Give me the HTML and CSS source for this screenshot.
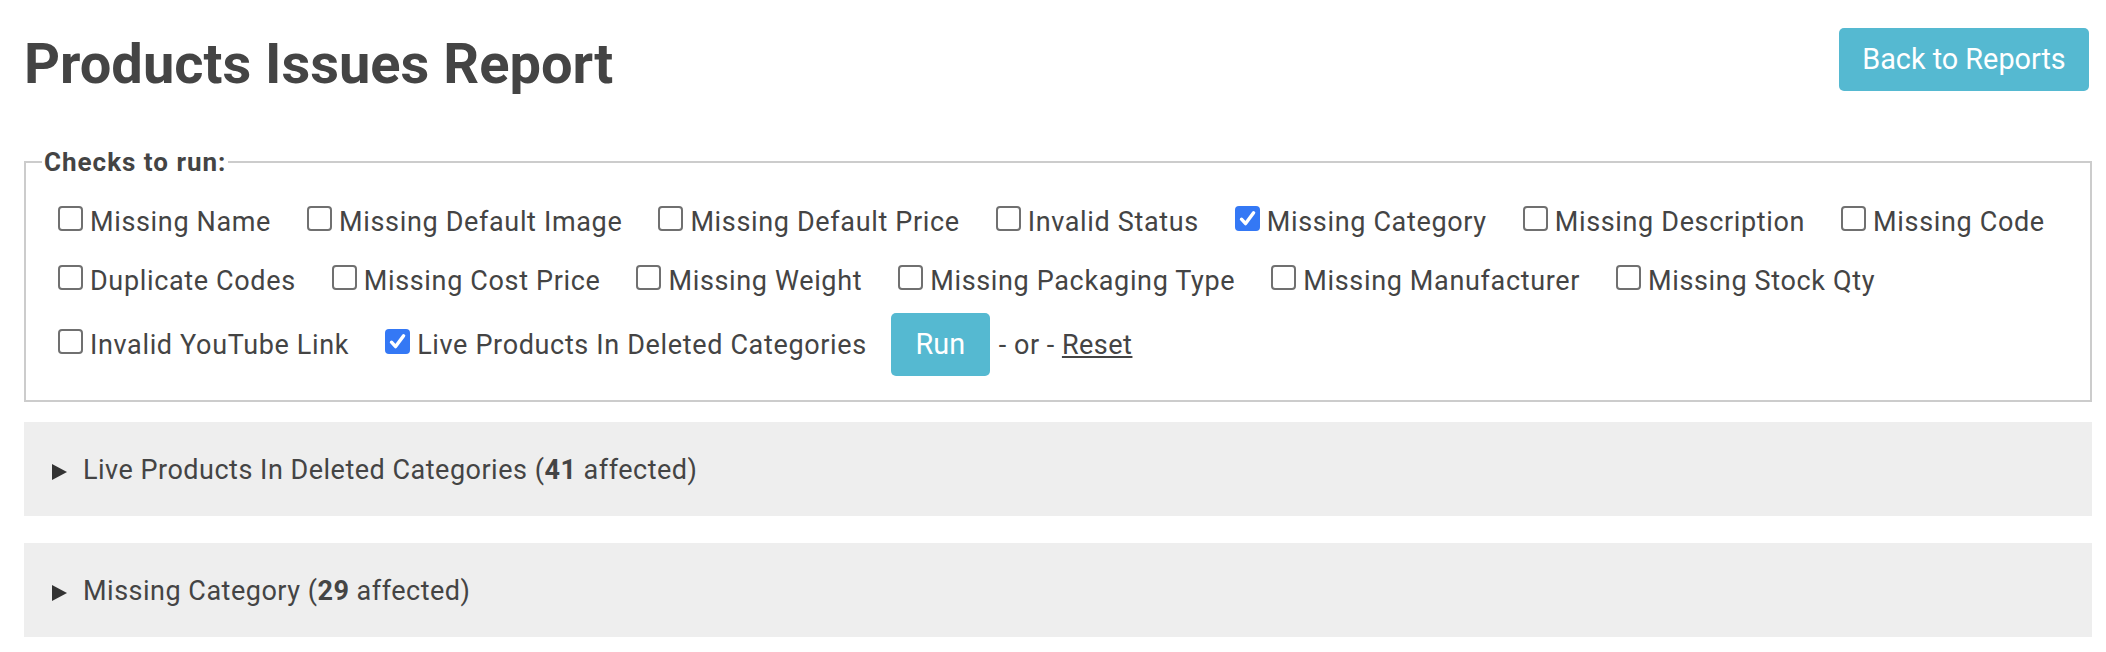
FILE: index.html
```html
<!DOCTYPE html>
<html lang="en">
<head>
<meta charset="utf-8">
<title>Products Issues Report</title>
<link rel="stylesheet" href="styles.css">
</head>
<body>
<div class="page">
  <header class="header">
    <h1 class="title">Products Issues Report</h1>
    <a class="btn btn-back" href="#">Back to Reports</a>
  </header>

  <form class="checks-form">
    <fieldset class="checks">
      <legend class="checks-legend">Checks to run:</legend>
      <div class="checks-body">
        <div class="check-row row-1">
          <label class="check"><span class="box"></span>Missing Name</label>
          <label class="check"><span class="box"></span>Missing Default Image</label>
          <label class="check"><span class="box"></span>Missing Default Price</label>
          <label class="check"><span class="box"></span>Invalid Status</label>
          <label class="check"><span class="box checked"><svg viewBox="0 0 25 25" width="25" height="25"><path d="M6.5 13.2 L10.6 17.6 L18.6 6.8" fill="none" stroke="#fff" stroke-width="3.4" stroke-linecap="round" stroke-linejoin="round"/></svg></span>Missing Category</label>
          <label class="check"><span class="box"></span>Missing Description</label>
          <label class="check"><span class="box"></span>Missing Code</label>
        </div>
        <div class="check-row row-2">
          <label class="check"><span class="box"></span>Duplicate Codes</label>
          <label class="check"><span class="box"></span>Missing Cost Price</label>
          <label class="check"><span class="box"></span>Missing Weight</label>
          <label class="check"><span class="box"></span>Missing Packaging Type</label>
          <label class="check"><span class="box"></span>Missing Manufacturer</label>
          <label class="check"><span class="box"></span>Missing Stock Qty</label>
        </div>
        <div class="check-row row-3">
          <label class="check"><span class="box"></span>Invalid YouTube Link</label>
          <label class="check check-last"><span class="box checked"><svg viewBox="0 0 25 25" width="25" height="25"><path d="M6.5 13.2 L10.6 17.6 L18.6 6.8" fill="none" stroke="#fff" stroke-width="3.4" stroke-linecap="round" stroke-linejoin="round"/></svg></span>Live Products In Deleted Categories</label>
          <button type="button" class="btn btn-run">Run</button>
          <span class="or">- or - <a href="#" class="reset">Reset</a></span>
        </div>
      </div>
    </fieldset>
  </form>

  <details class="issue issue-first">
    <summary class="issue-summary"><svg class="tri" viewBox="0 0 15 16" width="15" height="16"><path d="M0 0 L15 8 L0 16 Z" fill="#333"/></svg>Live Products In Deleted Categories (<b>41</b> affected)</summary>
  </details>
  <details class="issue">
    <summary class="issue-summary"><svg class="tri" viewBox="0 0 15 16" width="15" height="16"><path d="M0 0 L15 8 L0 16 Z" fill="#333"/></svg>Missing Category (<b>29</b> affected)</summary>
  </details>
</div>
</body>
</html>
```

FILE: styles.css
```css
html, body {
  margin: 0;
  padding: 0;
  background: #fff;
}

body {
  font-family: Roboto, "Liberation Sans", Arial, sans-serif;
  font-size: 27px;
  line-height: 1.5;
  letter-spacing: 0.65px;
  color: #444;
}

.page {
  padding: 0 14px 0 24px;
}

.header {
  display: flex;
  justify-content: space-between;
  align-items: flex-start;
  height: 96px;
}

.title {
  margin: 32px 0 0;
  font-size: 56px;
  line-height: 64px;
  font-weight: 700;
  letter-spacing: 0;
  color: #444;
}

.btn {
  display: inline-block;
  box-sizing: border-box;
  height: 63px;
  padding: 0 25px;
  border: 0;
  border-radius: 5px;
  background: #55b9d1;
  color: #fff;
  font-family: Roboto, "Liberation Sans", Arial, sans-serif;
  font-size: 28.8px;
  line-height: 63px;
  letter-spacing: 0;
  text-decoration: none;
  cursor: pointer;
}

.btn-back {
  margin-top: 28px;
  margin-right: 3px;
  width: 250px;
  text-align: center;
  padding: 0;
}

.checks-form {
  margin: 47px 0 0;
}

.checks {
  margin: 0;
  padding: 0 16px 24px;
  border: 2px solid #cccccc;
  min-width: 0;
}

.checks-legend {
  padding: 0 2px;
  font-weight: 700;
  font-size: 26px;
  line-height: 38px;
  letter-spacing: 1px;
  color: #444;
}

.checks-body {
  padding: 22px 0 0 16px;
}

.check-row {
  display: flex;
  align-items: baseline;
}

.row-2 {
  margin-top: 21px;
}

.row-3 {
  margin-top: 13px;
}

.check {
  display: block;
  margin-right: 36px;
  white-space: nowrap;
  line-height: 38px;
}

.check-last {
  margin-right: 24px;
}

.box {
  display: inline-block;
  box-sizing: border-box;
  width: 25px;
  height: 25px;
  margin-right: 7px;
  border: 2px solid #707070;
  border-radius: 4px;
  background: #fff;
  vertical-align: baseline;
}

.box.checked {
  border: 0;
  background: #3478f5;
}

.box svg {
  display: block;
}

.btn-run {
  width: 99px;
  padding: 0;
  text-align: center;
  margin-right: 9px;
}

.or {
  white-space: nowrap;
  line-height: 38px;
  letter-spacing: 0.5px;
}

.reset {
  color: #444;
  text-decoration: underline;
}

.issue {
  margin-top: 27px;
  background: #eeeeee;
}

.issue-first {
  margin-top: 20px;
}

.issue-summary {
  display: block;
  list-style: none;
  padding: 29px 28px 27px;
  line-height: 38px;
  letter-spacing: 0.5px;
  cursor: pointer;
}

.issue-summary::-webkit-details-marker {
  display: none;
}

.issue-summary b {
  font-weight: 700;
}

.tri {
  display: inline-block;
  margin-right: 16px;
  vertical-align: -1px;
}
```
